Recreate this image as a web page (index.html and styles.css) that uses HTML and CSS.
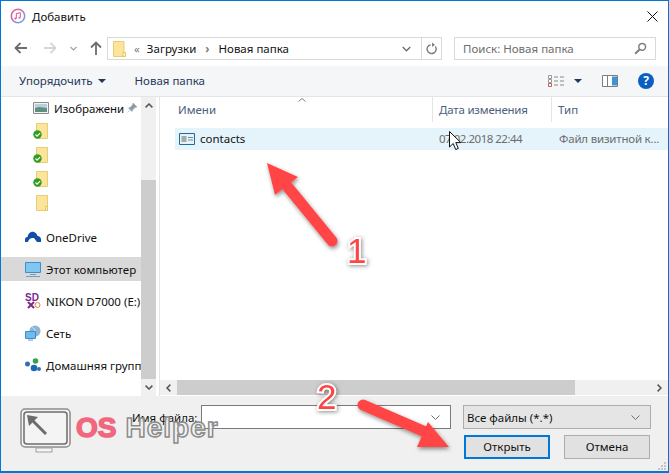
FILE: index.html
```html
<!DOCTYPE html>
<html lang="ru">
<head>
    <meta charset="UTF-8">
    <title>Добавить</title>
    <link rel="stylesheet" href="styles.css">
</head>
<body>

<div class="window">
    <div class="titlebar">
        <svg class="app-icon" width="16" height="16" viewBox="0 0 16 16">
            <defs>
                <linearGradient id="ring" x1="0" y1="0" x2="1" y2="1">
                    <stop offset="0" stop-color="#f05a7a"/>
                    <stop offset="0.5" stop-color="#b86fd8"/>
                    <stop offset="1" stop-color="#5fb4ee"/>
                </linearGradient>
            </defs>
            <circle cx="8" cy="8" r="6.7" fill="#fff" stroke="url(#ring)" stroke-width="1.6"/>
            <path d="M6.3 10.5V5.6l4-.9v4.9" fill="none" stroke="#d2587f" stroke-width="1"/>
            <circle cx="5.4" cy="10.6" r="1" fill="#d2587f"/>
            <circle cx="9.4" cy="9.7" r="1" fill="#b86fd8"/>
        </svg>
        <span class="title">Добавить</span>
        <svg class="close" width="11" height="11" viewBox="0 0 11 11">
            <path d="M.5.5l10 10M10.5.5l-10 10" stroke="#111" stroke-width="1"/>
        </svg>
    </div>

    <div class="addressbar">
        <div class="nav">
            <svg width="14" height="12" viewBox="0 0 14 12"><path d="M13 6H2M6.500 1L1.500 6l5 5" fill="none" stroke="#6d6d6d" stroke-width="1.800"/></svg>
            <svg width="14" height="12" viewBox="0 0 14 12"><path d="M1 6h11M7.500 1l5 5-5 5" fill="none" stroke="#d6d6d6" stroke-width="1.800"/></svg>
            <svg width="7" height="5" viewBox="0 0 7 5"><path d="M.5 1l3 3 3-3" fill="none" stroke="#a0a0a0" stroke-width="1.200"/></svg>
            <svg width="12" height="14" viewBox="0 0 12 14"><path d="M6 14V2M1 6.500l5-5 5 5" fill="none" stroke="#6d6d6d" stroke-width="1.800"/></svg>
        </div>
        <div class="path">
            <svg class="folder" width="13" height="16" viewBox="0 0 13 16"><path d="M.5.5h10.500v15H.5z" fill="#fde49b" stroke="#e8cd72"/><path d="M10 11.500h2.500v4H10z" fill="#fff2c8" stroke="#e6c660"/></svg>
            <span class="crumb-sep">«</span>
            <span class="crumb">Загрузки</span>
            <span class="crumb-sep arrow">›</span>
            <span class="crumb">Новая папка</span>
            <svg class="path-drop" width="9" height="6" viewBox="0 0 9 6"><path d="M.7 1l3.800 3.800L8.300 1" fill="none" stroke="#6d6d6d" stroke-width="1.300"/></svg>
            <div class="refresh">
                <svg width="12" height="13" viewBox="0 0 12 13"><path d="M3 3.500a4.500 4.500 0 1 0 5 0" fill="none" stroke="#808080" stroke-width="1.500" transform="rotate(20 6 7.500)"/><path d="M6 .5v4.500l3-2.200z" fill="#808080"/></svg>
            </div>
        </div>
        <div class="search">
            <span>Поиск: Новая папка</span>
            <svg width="13" height="13" viewBox="0 0 13 13"><circle cx="8.200" cy="4.800" r="3.400" fill="none" stroke="#808080" stroke-width="1.500"/><path d="M5.700 7.300L1.200 11.800" stroke="#808080" stroke-width="2"/></svg>
        </div>
    </div>

    <div class="toolbar">
        <span class="tool">Упорядочить</span>
        <span class="tool-caret"></span>
        <span class="tool new-folder">Новая папка</span>
        <svg class="view-icon" width="17" height="12" viewBox="0 0 17 12">
            <path d="M.5.5h3v3h-3zM.5 4.500h3v3h-3z" fill="#fff" stroke="#9a9a9a"/>
            <path d="M.5 8.500h3v3h-3z" fill="#fff" stroke="#c06060"/>
            <path d="M6 2h4M12 2h4M6 6h4M12 6h4M6 10h4M12 10h4" stroke="#8a8a8a"/>
        </svg>
        <span class="tool-caret view-caret"></span>
        <svg class="pane-icon" width="16" height="12" viewBox="0 0 16 12">
            <path d="M.5.5h15v11H.5z" fill="#fff" stroke="#7d7d7d"/>
            <path d="M10 1.500h5v9h-5z" fill="#3d94dc"/>
            <path d="M5.500 1v10" stroke="#7d7d7d"/>
        </svg>
        <span class="help">?</span>
    </div>

    <div class="main">
        <div class="sidebar">
            <div class="nav-item first">
                <svg width="16" height="12" viewBox="0 0 16 12"><path d="M.5.5h15v11H.5z" fill="#eef3f6" stroke="#8c8c8c"/><path d="M2 2h12v4l-6 1-6-1z" fill="#b8cfe0"/><path d="M2 6l4-1 8 1v4H2z" fill="#5f8f80"/></svg>
                <span class="nav-label">Изображени</span>
                <svg class="pin" width="10" height="10" viewBox="0 0 10 10"><path d="M6 0l4 4-2 .5L5.500 7 5 8.500 1.500 5l1.500-.5L5.500 2zM3 7L.5 9.500" fill="#8e9aa5" stroke="#8e9aa5" stroke-width=".5"/></svg>
            </div>
            <div class="nav-item folder-row">
                <svg width="16" height="16" viewBox="0 0 16 16"><path d="M3.500.5h11v15h-11z" fill="#fde49b" stroke="#e8cd72"/><circle cx="4.500" cy="11.500" r="4.200" fill="#2f9e1f"/><path d="M2.500 11.500l1.600 1.600 3-3" fill="none" stroke="#fff" stroke-width="1.300"/></svg>
            </div>
            <div class="nav-item folder-row">
                <svg width="16" height="16" viewBox="0 0 16 16"><path d="M3.500.5h11v15h-11z" fill="#fde49b" stroke="#e8cd72"/><circle cx="4.500" cy="11.500" r="4.200" fill="#2f9e1f"/><path d="M2.500 11.500l1.600 1.600 3-3" fill="none" stroke="#fff" stroke-width="1.300"/></svg>
            </div>
            <div class="nav-item folder-row">
                <svg width="16" height="16" viewBox="0 0 16 16"><path d="M3.500.5h11v15h-11z" fill="#fde49b" stroke="#e8cd72"/><circle cx="4.500" cy="11.500" r="4.200" fill="#2f9e1f"/><path d="M2.500 11.500l1.600 1.600 3-3" fill="none" stroke="#fff" stroke-width="1.300"/></svg>
            </div>
            <div class="nav-item folder-row">
                <svg width="16" height="16" viewBox="0 0 16 16"><path d="M3.500.5h11v15h-11z" fill="#fde49b" stroke="#e8cd72"/><path d="M12.500 11.500h2v4h-2z" fill="#fff2c8" stroke="#e6c660"/></svg>
            </div>
            <div class="nav-item group-start">
                <svg width="16" height="12" viewBox="0 0 16 12"><path d="M0 11V8.500a2.500 2.500 0 0 1 2.500-2.500C3 2.500 6 0 9 1c2 .7 3 2 3.500 4 2 0 3.500 1.500 3.500 3.500V11z" fill="#0f4fa8"/><path d="M3 11c.5-3 3-4.500 6-4l3 4z" fill="#fff"/></svg>
                <span class="nav-label">OneDrive</span>
            </div>
            <div class="nav-item selected">
                <svg width="16" height="15" viewBox="0 0 16 15"><path d="M.5.5h15v10H.5z" fill="#7fc6f0" stroke="#3a8fd0"/><path d="M5 12.500h6M1 14.500h14" stroke="#7a9ab0"/></svg>
                <span class="nav-label">Этот компьютер</span>
            </div>
            <div class="nav-item group-tight">
                <svg width="16" height="16" viewBox="0 0 16 16"><text class="sd-text" x="0" y="8">SD</text><path d="M3 9l6 6M9 9l-6 6" stroke="#7a2a90" stroke-width="2"/><circle cx="12.500" cy="12" r="2.500" fill="none" stroke="#f08030"/></svg>
                <span class="nav-label">NIKON D7000 (E:)</span>
            </div>
            <div class="nav-item group-tight">
                <svg width="16" height="16" viewBox="0 0 16 16"><circle cx="10" cy="6" r="5.500" fill="#8db4d2"/><path d="M7 2c2 1 4 3 3 7" fill="none" stroke="#dce9f2"/><path d="M.5 6.500h10v7H.5z" fill="#6fbcec" stroke="#3a8fd0"/><path d="M3 15h5" stroke="#7a9ab0"/></svg>
                <span class="nav-label">Сеть</span>
            </div>
            <div class="nav-item group-tight">
                <svg width="16" height="14" viewBox="0 0 16 14"><circle cx="2.500" cy="6" r="2.500" fill="#2f70b8"/><circle cx="10.500" cy="3" r="2.800" fill="#3aa14a"/><circle cx="9" cy="10" r="3.300" fill="#1f66b0"/><circle cx="14" cy="11" r="2" fill="#2f70b8"/></svg>
                <span class="nav-label">Домашняя групп</span>
            </div>
        </div>

        <div class="vscroll">
            <div class="scroll-btn top"><svg width="8" height="5" viewBox="0 0 8 5"><path d="M.6 4.400L4 1l3.400 3.400" fill="none" stroke="#555" stroke-width="1.500"/></svg></div>
            <div class="vthumb"></div>
            <div class="scroll-btn bottom"><svg width="8" height="5" viewBox="0 0 8 5"><path d="M.6.6L4 4 7.400.6" fill="none" stroke="#555" stroke-width="1.500"/></svg></div>
        </div>

        <div class="content">
            <div class="columns">
                <span class="col col-name">Имени</span>
                <span class="col col-date">Дата изменения</span>
                <span class="col col-type">Тип</span>
                <svg class="sort-caret" width="8" height="4" viewBox="0 0 8 4"><path d="M.5 3.500L4 .5l3.500 3" fill="none" stroke="#7d7d7d"/></svg>
            </div>
            <div class="file-row">
                <div class="file-name">
                    <svg width="16" height="12" viewBox="0 0 16 12"><path d="M.5.5h15v11H.5z" fill="#e9f1f7" stroke="#1f6a9f"/><path d="M2.500 3h5v6h-5z" fill="#9bb0a8"/><path d="M9 4.500h5M9 7h5" stroke="#5a93b8"/></svg>
                    <span>contacts</span>
                </div>
                <span class="file-date">07.02.2018 22:44</span>
                <span class="file-type">Файл визитной к...</span>
            </div>
            <div class="hscroll">
                <div class="hbtn"><svg width="5" height="8" viewBox="0 0 5 8"><path d="M4.400.6L1 4l3.400 3.400" fill="none" stroke="#555" stroke-width="1.500"/></svg></div>
                <div class="hthumb"></div>
                <div class="hbtn right"><svg width="5" height="8" viewBox="0 0 5 8"><path d="M.6.6L4 4 .6 7.400" fill="none" stroke="#555" stroke-width="1.500"/></svg></div>
            </div>
        </div>
    </div>

    <div class="footer">
        <div class="footer-row">
            <label class="file-label" for="filename">Имя файла:</label>
            <div class="combo">
                <input id="filename" type="text">
                <svg width="9" height="5" viewBox="0 0 9 5"><path d="M.5.5l4 4 4-4" fill="none" stroke="#707070"/></svg>
            </div>
            <div class="filter">
                <span>Все файлы (*.*)</span>
                <svg width="9" height="5" viewBox="0 0 9 5"><path d="M.5.5l4 4 4-4" fill="none" stroke="#707070"/></svg>
            </div>
        </div>
        <div class="footer-buttons">
            <button class="btn default">Открыть</button>
            <button class="btn">Отмена</button>
        </div>
        <svg class="grip" width="10" height="10" viewBox="0 0 10 10"><path d="M7 1h2v2H7zM4 4h2v2H4zM7 4h2v2H7zM1 7h2v2H1zM4 7h2v2H4zM7 7h2v2H7z" fill="#c4c4c4"/></svg>
    </div>

    <!-- watermark and annotations drawn over the dialog -->
    <div class="watermark">
        <svg width="52" height="45" viewBox="0 0 52 45">
            <rect x="1" y="1" width="49" height="38" rx="4" fill="#f4f4f4" stroke="#8c8c8c" stroke-width="1.500"/>
            <rect x="4" y="4" width="43" height="32" rx="3" fill="none" stroke="#6c6c6c" stroke-width="1.500"/>
            <path d="M26 26L10 10" stroke="#6c6c6c" stroke-width="3"/>
            <path d="M7 7l11 2-9 9z" fill="#6c6c6c"/>
            <rect x="16" y="40" width="16" height="4" fill="#f4f4f4" stroke="#a0a0a0"/>
        </svg>
        <span class="wm-os">OS</span>
        <span class="wm-helper">Helper</span>
    </div>

    <svg class="cursor" width="13" height="20" viewBox="0 0 13 20">
        <path d="M.5.5v15.500l3.700-3.500 2.500 6 2.600-1.100-2.500-5.800h5z" fill="#fff" stroke="#111"/>
    </svg>

    <svg class="marks" width="669" height="473" viewBox="0 0 669 473">
        <defs>
            <filter id="soft" x="-20%" y="-20%" width="140%" height="140%">
                <feDropShadow dx="1" dy="2" stdDeviation="2" flood-color="#000" flood-opacity=".45"/>
            </filter>
        </defs>
        <g filter="url(#soft)">
            <path d="M287 186L332 241" stroke="#ff4444" stroke-width="11" stroke-linecap="round"/>
            <path d="M267 163L298 177 275 195z" fill="#ff4444"/>
        </g>
        <g filter="url(#soft)">
            <path d="M363 405L430 434" stroke="#ff4444" stroke-width="11" stroke-linecap="round"/>
            <path d="M449 447L428 422 417 447z" fill="#ff4444"/>
        </g>
        <text class="mark-num" x="347" y="263">1</text>
        <text class="mark-num" x="317" y="409">2</text>
    </svg>
</div>

</body>
</html>
```

FILE: styles.css
```css
* {
    box-sizing: border-box;
}

body {
    margin: 0;
    font-family: "Noto Sans", Arial, sans-serif;
    font-size: 11.5px;
    color: #111;
    background-color: white;
}

.window {
    position: relative;
    width: 669px;
    height: 473px;
    display: flex;
    flex-direction: column;
    border: 1px solid #0078d7;
    border-bottom-width: 2px;
    background-color: white;
    overflow: hidden;
}

.titlebar {
    height: 30px;
    display: flex;
    align-items: center;
    padding: 0 10px 0 9px;
    flex-shrink: 0;
}

.title {
    margin-left: 6px;
}

.close {
    margin-left: auto;
}

.addressbar {
    height: 35px;
    display: flex;
    align-items: flex-start;
    padding-top: 6px;
    flex-shrink: 0;
}

.nav {
    width: 106px;
    height: 22px;
    display: flex;
    align-items: center;
    padding-left: 13px;
    gap: 15px;
}

.nav svg:nth-child(3) {
    margin-left: -2px;
    margin-right: -2px;
}

.path {
    width: 335px;
    height: 23px;
    display: flex;
    align-items: center;
    border: 1px solid #d9d9d9;
    padding-left: 5px;
    gap: 7px;
}

.folder {
    margin-right: 1px;
}

.crumb-sep {
    color: #808080;
}

.crumb-sep.arrow {
    margin: 0 2px;
    font-weight: bold;
}

.path-drop {
    margin-left: auto;
    margin-right: 4px;
}

.refresh {
    width: 20px;
    height: 21px;
    display: flex;
    align-items: center;
    justify-content: center;
    border-left: 1px solid #d9d9d9;
    margin-left: -1px;
}

.search {
    width: 202px;
    height: 23px;
    margin-left: 12px;
    display: flex;
    align-items: center;
    justify-content: space-between;
    border: 1px solid #d9d9d9;
    padding: 0 8px 0 8px;
    color: #6d6d6d;
}

.toolbar {
    height: 31px;
    display: flex;
    align-items: center;
    padding: 0 14px 1px 18px;
    background-color: #f5f6f7;
    border-bottom: 1px solid #e5e5e5;
    color: #1e395b;
    flex-shrink: 0;
}

.tool-caret {
    width: 0;
    height: 0;
    margin-left: 5px;
    border-left: 4px solid transparent;
    border-right: 4px solid transparent;
    border-top: 4px solid #1e395b;
}

.new-folder {
    margin-left: 29px;
}

.view-icon {
    margin-left: auto;
}

.view-caret {
    margin-left: 9px;
}

.pane-icon {
    margin-left: 20px;
}

.help {
    width: 16px;
    height: 16px;
    margin-left: 20px;
    border-radius: 50%;
    background-color: #0a5fc0;
    color: white;
    font-weight: bold;
    font-size: 12px;
    line-height: 16px;
    text-align: center;
}

.main {
    flex: 1;
    display: flex;
    min-height: 0;
}

.sidebar {
    width: 140px;
    overflow: hidden;
    flex-shrink: 0;
}

.nav-item {
    height: 24px;
    display: flex;
    align-items: center;
    padding-left: 32px;
    white-space: nowrap;
}

.nav-item.first {
    height: 22px;
}

.nav-item svg {
    flex-shrink: 0;
}

.group-start {
    margin-top: 10px;
    padding-left: 24px;
}

.selected {
    margin-top: 8px;
    padding-left: 24px;
    background-color: #d9d9d9;
}

.group-tight {
    margin-top: 8px;
    padding-left: 24px;
}

.nav-label {
    margin-left: 5px;
}

.pin {
    margin-left: 3px;
}

.sd-text {
    font-family: "Liberation Sans", Arial, sans-serif;
    font-size: 10px;
    font-weight: bold;
    fill: #7a2a90;
}

.vscroll {
    width: 15px;
    display: flex;
    flex-direction: column;
    background-color: #f0f0f0;
    flex-shrink: 0;
}

.scroll-btn {
    height: 17px;
    display: flex;
    align-items: center;
    justify-content: center;
}

.vthumb {
    height: 199px;
    margin-top: 66px;
    background-color: #cdcdcd;
}

.content {
    flex: 1;
    display: flex;
    flex-direction: column;
    min-width: 0;
    margin-left: 3px;
    border-left: 1px solid #e5e5e5;
    position: relative;
}

.columns {
    height: 25px;
    flex-shrink: 0;
    display: flex;
    color: #4c607a;
    padding-left: 15px;
}

.col {
    display: flex;
    align-items: center;
    height: 25px;
    border-right: 1px solid #e5e5e5;
    padding-left: 3px;
}

.col-name {
    width: 258px;
}

.col-date {
    width: 119px;
    padding-left: 6px;
    letter-spacing: -0.2px;
}

.col-type {
    border-right: none;
    padding-left: 6px;
}

.sort-caret {
    position: absolute;
    left: 138px;
    top: 1px;
}

.file-row {
    height: 22px;
    margin: 6px 0 0 15px;
    padding-bottom: 1px;
    flex-shrink: 0;
    display: flex;
    align-items: center;
    background-color: #e5f3fb;
    color: #6d6d6d;
}

.file-name {
    width: 258px;
    display: flex;
    align-items: center;
    gap: 5px;
    padding-left: 4px;
    color: #111;
}

.file-date {
    width: 119px;
    padding-left: 6px;
    letter-spacing: -0.5px;
}

.file-type {
    padding-left: 7px;
    white-space: nowrap;
    letter-spacing: -0.2px;
}

.hscroll {
    height: 15px;
    margin-top: auto;
    margin-bottom: 1px;
    display: flex;
    background-color: #f0f0f0;
}

.hbtn {
    width: 17px;
    display: flex;
    align-items: center;
    justify-content: center;
}

.hbtn.right {
    margin-left: auto;
}

.hthumb {
    width: 398px;
    background-color: #cdcdcd;
}

.footer {
    position: relative;
    height: 75px;
    flex-shrink: 0;
    background-color: #f0f0f0;
    padding-top: 9px;
}

.footer-row {
    display: flex;
    align-items: center;
    height: 24px;
}

.file-label {
    margin-left: 131px;
    width: 69px;
}

.combo {
    width: 250px;
    height: 24px;
    display: flex;
    align-items: center;
    justify-content: flex-end;
    padding-right: 10px;
    border: 1px solid #7a7a7a;
    background-color: white;
}

.combo input {
    flex: 1;
    min-width: 0;
    border: none;
    outline: none;
    background: transparent;
}

.filter {
    width: 188px;
    height: 24px;
    margin-left: 12px;
    display: flex;
    align-items: center;
    justify-content: space-between;
    padding: 0 10px 0 3px;
    border: 1px solid #adadad;
    background-color: #e5e5e5;
}

.footer-buttons {
    display: flex;
    justify-content: flex-end;
    gap: 14px;
    margin-top: 6px;
    padding-right: 18px;
}

.btn {
    width: 86px;
    height: 24px;
    padding: 0 0 1px;
    border: 1px solid #adadad;
    background-color: #e1e1e1;
    font-family: inherit;
    font-size: 11.5px;
    color: #111;
}

.btn.default {
    border: 2px solid #0078d7;
}

.grip {
    position: absolute;
    right: 1px;
    bottom: 0;
}

.watermark {
    position: absolute;
    left: 19px;
    top: 407px;
    display: flex;
    align-items: center;
    pointer-events: none;
}

.wm-os,
.wm-helper {
    font-family: "Liberation Sans", Arial, sans-serif;
    font-size: 28px;
    font-weight: bold;
    line-height: 32px;
    margin-top: -6px;
}

.wm-os {
    margin-left: 4px;
    color: #f0677f;
    -webkit-text-stroke: 1.5px #f0677f;
    text-shadow: 0 0 1px #fff;
}

.wm-helper {
    margin-left: 9px;
    letter-spacing: 1px;
    color: rgba(245, 245, 245, 0.75);
    -webkit-text-stroke: 1.5px #8c8c8c;
}

.cursor {
    position: absolute;
    left: 448px;
    top: 130px;
}

.marks {
    position: absolute;
    left: -1px;
    top: -1px;
    pointer-events: none;
}

.mark-num {
    font-family: "Liberation Sans", Arial, sans-serif;
    font-size: 35px;
    fill: #ff4444;
    stroke: white;
    stroke-width: 4px;
    paint-order: stroke;
    filter: drop-shadow(1px 1px 2px rgba(0, 0, 0, 0.45));
}
```
